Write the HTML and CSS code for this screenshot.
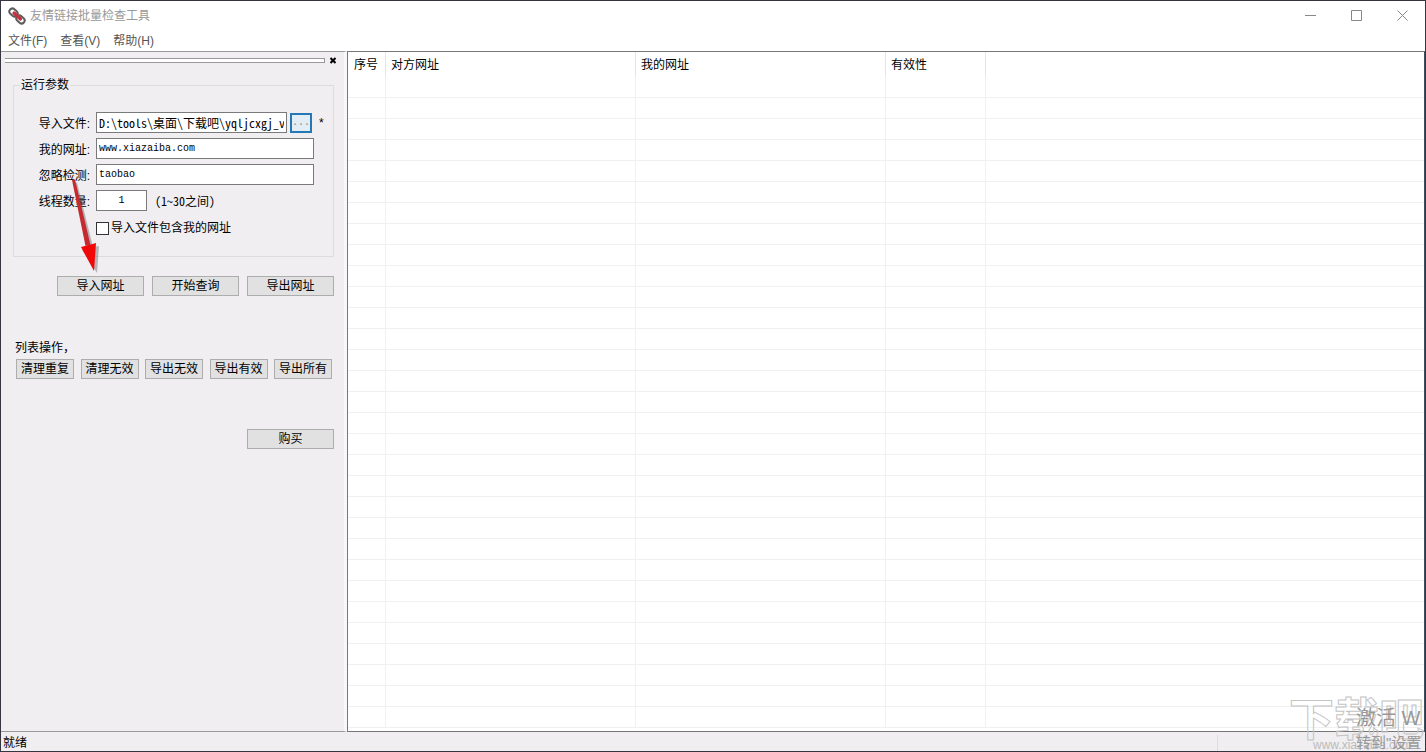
FILE: index.html
```html
<!DOCTYPE html>
<html lang="zh-CN">
<head>
<meta charset="utf-8">
<title>友情链接批量检查工具</title>
<link rel="stylesheet" href="styles.css">
</head>
<body>
<div class="window">
  <header class="titlebar">
    <svg class="app-icon" viewBox="0 0 18 18" width="18" height="18" aria-hidden="true">
      <g fill="none" stroke-linecap="round">
        <rect x="1" y="2.500" width="9" height="6" rx="3" transform="rotate(42 5.5 5.5)" stroke="#5c5c5c" stroke-width="2"/>
        <rect x="8" y="9.500" width="9" height="6" rx="3" transform="rotate(42 12.5 12.5)" stroke="#5c5c5c" stroke-width="2"/>
        <path d="M6 6l6.500 6" stroke="#c4303c" stroke-width="3.200"/>
      </g>
    </svg>
    <h1 class="title">友情链接批量检查工具</h1>
    <div class="controls">
      <button class="control" aria-label="最小化"><svg width="11" height="11" viewBox="0 0 11 11"><path d="M0 5.5h11"/></svg></button>
      <button class="control" aria-label="最大化"><svg width="11" height="11" viewBox="0 0 11 11"><path d="M.5.5h10v10H.5z"/></svg></button>
      <button class="control" aria-label="关闭"><svg width="11" height="11" viewBox="0 0 11 11"><path d="M.5.5l10 10M10.500.5l-10 10"/></svg></button>
    </div>
  </header>
  <nav class="menubar">
    <button class="menu">文件(F)</button>
    <button class="menu">查看(V)</button>
    <button class="menu">帮助(H)</button>
  </nav>
  <main class="workspace">
    <aside class="dock">
      <div class="gripper">
        <span class="grip"></span>
        <button class="dock-close" aria-label="关闭面板"><svg width="6" height="7" viewBox="0 0 6 7"><path d="M.5 1l5 5M5.500 1l-5 5"/></svg></button>
      </div>
      <fieldset class="group">
        <legend class="legend">运行参数</legend>
        <div class="form">
          <label class="label" for="file">导入文件:</label>
          <div class="field">
            <input class="text path" id="file" type="text" value="D:\tools\桌面\下载吧\yqljcxgj_v">
            <button class="browse" aria-label="浏览">...</button>
            <span class="star">*</span>
          </div>
          <label class="label" for="mine">我的网址:</label>
          <div class="field"><input class="text wide" id="mine" type="text" value="www.xiazaiba.com"></div>
          <label class="label" for="ignore">忽略检测:</label>
          <div class="field"><input class="text wide" id="ignore" type="text" value="taobao"></div>
          <label class="label" for="threads">线程数量:</label>
          <div class="field"><input class="text count" id="threads" type="text" value="1"><span class="hint">(1~30之间)</span></div>
          <label class="check"><input class="box" type="checkbox">导入文件包含我的网址</label>
        </div>
      </fieldset>
      <div class="actions">
        <button class="btn">导入网址</button>
        <button class="btn">开始查询</button>
        <button class="btn">导出网址</button>
      </div>
      <h2 class="list-title">列表操作，</h2>
      <div class="list-actions">
        <button class="btn small">清理重复</button>
        <button class="btn small">清理无效</button>
        <button class="btn small">导出无效</button>
        <button class="btn small">导出有效</button>
        <button class="btn small">导出所有</button>
      </div>
      <div class="buy"><button class="btn">购买</button></div>
      <svg class="arrow" width="44" height="106" viewBox="0 0 44 106" aria-hidden="true">
        <path d="M11 9L13 8.500 29 73l6-1-2 27-15-23 6-2z" fill="#444" opacity=".35"/>
        <path d="M8 6L11 5.500 26.500 71 21.500 72z" fill="#c42a30"/>
        <path d="M17 73l8-2 7-2-2 28z" fill="#f00808"/>
      </svg>
    </aside>
    <section class="list">
      <table class="grid">
        <colgroup><col class="c-no"><col class="c-url"><col class="c-url"><col class="c-ok"><col></colgroup>
        <thead><tr><th>序号</th><th>对方网址</th><th>我的网址</th><th>有效性</th><th></th></tr></thead>
        <tbody>
          <tr><td></td><td></td><td></td><td></td><td></td></tr>
          <tr><td></td><td></td><td></td><td></td><td></td></tr>
          <tr><td></td><td></td><td></td><td></td><td></td></tr>
          <tr><td></td><td></td><td></td><td></td><td></td></tr>
          <tr><td></td><td></td><td></td><td></td><td></td></tr>
          <tr><td></td><td></td><td></td><td></td><td></td></tr>
          <tr><td></td><td></td><td></td><td></td><td></td></tr>
          <tr><td></td><td></td><td></td><td></td><td></td></tr>
          <tr><td></td><td></td><td></td><td></td><td></td></tr>
          <tr><td></td><td></td><td></td><td></td><td></td></tr>
          <tr><td></td><td></td><td></td><td></td><td></td></tr>
          <tr><td></td><td></td><td></td><td></td><td></td></tr>
          <tr><td></td><td></td><td></td><td></td><td></td></tr>
          <tr><td></td><td></td><td></td><td></td><td></td></tr>
          <tr><td></td><td></td><td></td><td></td><td></td></tr>
          <tr><td></td><td></td><td></td><td></td><td></td></tr>
          <tr><td></td><td></td><td></td><td></td><td></td></tr>
          <tr><td></td><td></td><td></td><td></td><td></td></tr>
          <tr><td></td><td></td><td></td><td></td><td></td></tr>
          <tr><td></td><td></td><td></td><td></td><td></td></tr>
          <tr><td></td><td></td><td></td><td></td><td></td></tr>
          <tr><td></td><td></td><td></td><td></td><td></td></tr>
          <tr><td></td><td></td><td></td><td></td><td></td></tr>
          <tr><td></td><td></td><td></td><td></td><td></td></tr>
          <tr><td></td><td></td><td></td><td></td><td></td></tr>
          <tr><td></td><td></td><td></td><td></td><td></td></tr>
          <tr><td></td><td></td><td></td><td></td><td></td></tr>
          <tr><td></td><td></td><td></td><td></td><td></td></tr>
          <tr><td></td><td></td><td></td><td></td><td></td></tr>
          <tr><td></td><td></td><td></td><td></td><td></td></tr>
          <tr><td></td><td></td><td></td><td></td><td></td></tr>
        </tbody>
      </table>
    </section>
  </main>
  <footer class="statusbar"><span class="status">就绪</span><span class="pane"></span></footer>
  <div class="watermark">
    <span class="mark-logo">下载吧</span>
    <span class="mark-url">www.xiazaiba.com</span>
    <span class="mark-activate">激活 W</span>
    <span class="mark-settings">转到"设置</span>
  </div>
</div>
</body>
</html>
```

FILE: styles.css
```css
* { box-sizing: border-box; }
body {
  margin: 0;
  font: 12px/16px "Liberation Sans", "Noto Sans CJK SC", sans-serif;
  color: #000;
}
button, input { font: inherit; color: inherit; border-radius: 0; margin: 0; }
.window {
  position: relative;
  display: flex;
  flex-direction: column;
  height: 100vh;
  overflow: hidden;
  border: 1px solid #34353f;
  background: #f0eef1;
}
.titlebar {
  display: flex;
  align-items: center;
  height: 29px;
  padding-left: 7px;
  gap: 4px;
  background: #fff;
}
.title { flex: 1; margin: 0; font-size: 12px; font-weight: 400; color: #999; }
.controls { display: flex; }
.control {
  width: 46px;
  height: 29px;
  padding: 0;
  border: 0;
  background: none;
  display: grid;
  place-items: center;
}
.control path { fill: none; stroke: #888; }
.menubar {
  display: flex;
  height: 21px;
  gap: 13px;
  padding-left: 7px;
  background: #fff;
  color: #555;
}
.menu { padding: 0; border: 0; background: none; }
.workspace { flex: 1; min-height: 0; display: flex; }
.dock {
  position: relative;
  width: 346px;
  padding: 5px 14px 0 4px;
  border-top: 1px solid #999;
  border-bottom: 1px solid #999;
  border-right: 3px solid #f8f7f9;
}
.gripper { display: flex; align-items: center; gap: 5px; height: 7px; }
.grip {
  flex: none;
  width: 319px;
  height: 5px;
  border: 1px solid #999;
  border-left: 0;
  background: #fff;
}
.dock-close { padding: 0; border: 0; background: none; display: flex; flex: none; }
.dock-close path { stroke: #000; stroke-width: 2; }
.gripper .grip { width: 320px; }
.gripper { margin-right: -10px; }
.group {
  width: 321px;
  height: 180px;
  margin: 13px 0 0 8px;
  padding: 0 0 0 12px;
  border: 1px solid #dcdcdc;
}
.legend { margin-left: -6px; padding: 0 1px; }
.form {
  display: grid;
  grid-template-columns: 64px 1fr;
  column-gap: 6px;
  row-gap: 5px;
  padding-top: 19px;
}
.label { text-align: right; height: 21px; line-height: 24px; white-space: nowrap; }
.field { display: flex; align-items: center; }
.text {
  height: 21px;
  padding: 0 2px;
  border: 1px solid #7a7a7a;
  background: #fff;
  font-family: "Liberation Mono", monospace;
  font-size: 10px;
}
.path { width: 191px; font-family: "Noto Sans Mono CJK SC", monospace; font-size: 12px; }
.wide { width: 218px; }
.count { width: 51px; text-align: center; }
.browse {
  width: 22px;
  height: 20px;
  margin: 0 7px 0 3px;
  padding: 0;
  border: 2px solid #2478b5;
  background: #e3edf5;
  font-family: "Liberation Mono", monospace;
  font-size: 10px;
  line-height: 14px;
  color: #888;
}
.star { line-height: 14px; }
.hint { margin-left: 8px; font-family: "Noto Sans Mono CJK SC", monospace; }
.check { grid-column: 2; display: flex; align-items: center; gap: 2px; height: 24px; }
.box {
  appearance: none;
  width: 13px;
  height: 13px;
  border: 1px solid #333;
  background: #fff;
}
.btn {
  width: 87px;
  height: 20px;
  padding: 0;
  border: 1px solid #adadad;
  background: #e1e1e1;
  line-height: 16px;
}
.small { width: 58px; }
.actions { display: flex; gap: 8px; justify-content: flex-end; margin: 19px -4px 0 0; }
.list-title { margin: 44px 0 0 10px; font-size: 12px; font-weight: 400; }
.list-actions { display: flex; justify-content: space-between; margin: 3px -2px 0 11px; }
.buy { display: flex; justify-content: flex-end; margin: 50px -4px 0 0; }
.arrow { position: absolute; left: 63px; top: 122px; }
.list {
  flex: 1;
  min-width: 0;
  overflow: hidden;
  border: 1px solid #777;
  border-right-color: #3f4e60;
  background: #fff;
}
.grid { width: 100%; table-layout: fixed; border-collapse: separate; border-spacing: 0; }
.c-no { width: 38px; }
.c-url { width: 250px; }
.c-ok { width: 100px; }
.grid th {
  height: 25px;
  padding: 1px 0 0 5px;
  border-right: 1px solid #e5e5e5;
  text-align: left;
  font-weight: 400;
}
.grid th:first-child { padding-left: 6px; }
.grid td {
  height: 21px;
  padding: 0;
  border-right: 1px solid #f0f0f0;
  border-bottom: 1px solid #f0f0f0;
}
.grid th:last-child, .grid td:last-child { border-right: 0; }
.statusbar { display: flex; justify-content: space-between; height: 19px; padding: 3px 0 0 2px; }
.pane { width: 208px; border-left: 1px solid #ddd; }
.watermark { position: absolute; right: 0; bottom: 0; width: 136px; height: 60px; overflow: hidden; color: #999; }
.watermark span { position: absolute; white-space: nowrap; }
.mark-logo {
  left: 0;
  top: 0;
  font-size: 45px;
  line-height: 60px;
  font-weight: 700;
  color: transparent;
  -webkit-text-stroke: 1px #c4c4c4;
}
.mark-url { left: 24px; bottom: 0; font-size: 12px; line-height: 12px; color: #bbb; }
.mark-activate { left: 67px; top: 15px; font-size: 20px; line-height: 24px; }
.mark-settings { left: 67px; bottom: -1px; font-size: 15px; line-height: 18px; }
```
